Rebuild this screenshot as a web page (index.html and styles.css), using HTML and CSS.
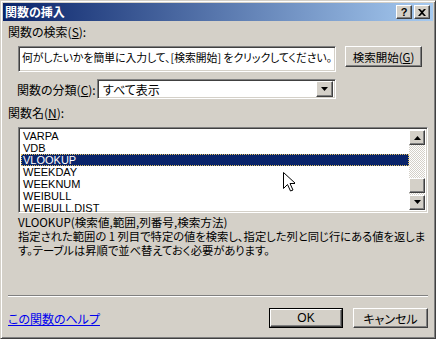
FILE: index.html
```html
<!doctype html>
<html lang="ja">
<head>
    <meta charset="UTF-8">
    <title>関数の挿入</title>
    <link rel="stylesheet" href="styles.css">
</head>
<body>
    <div class="win">
        <div class="title">
            <span class="title-text">関数の挿入</span>
            <span class="tbtn">?</span>
            <span class="tbtn">
                <svg width="8" height="7" viewBox="0 0 8 7"><path d="M0 0h2l2 2 2-2h2L5 3.5 8 7H6L4 5 2 7H0l3-3.5z" fill="#000"/></svg>
            </span>
        </div>
        <div class="content">
            <div class="lbl">関数の検索(<u>S</u>):</div>
            <div class="search-row">
                <div class="field search">何がしたいかを簡単に入力して、[検索開始] をクリックしてください。</div>
                <div class="btn search-btn">検索開始(<u>G</u>)</div>
            </div>
            <div class="cat-row">
                <span class="cat-lbl">関数の分類(<u>C</u>):</span>
                <div class="field select">
                    <span class="sel-text">すべて表示</span>
                    <span class="btn drop"><svg width="7" height="4" viewBox="0 0 7 4"><path d="M0 0h7L3.5 4z" fill="#000"/></svg></span>
                </div>
            </div>
            <div class="lbl name-lbl">関数名(<u>N</u>):</div>
            <div class="field list">
                <ul class="items">
                    <li>VARPA</li>
                    <li>VDB</li>
                    <li class="sel">VLOOKUP</li>
                    <li>WEEKDAY</li>
                    <li>WEEKNUM</li>
                    <li>WEIBULL</li>
                    <li>WEIBULL.DIST</li>
                </ul>
                <div class="sbar">
                    <span class="btn sb-btn"><svg width="7" height="4" viewBox="0 0 7 4"><path d="M3.5 0L7 4H0z" fill="#000"/></svg></span>
                    <span class="track top"></span>
                    <span class="btn thumb"></span>
                    <span class="btn sb-btn"><svg width="7" height="4" viewBox="0 0 7 4"><path d="M0 0h7L3.5 4z" fill="#000"/></svg></span>
                </div>
                <svg class="cursor" width="12" height="20" viewBox="0 0 12 20"><path d="M0.5 0.5v16l4-4 3 6.5 2.5-1-3-6.5h5.5z" fill="#fff" stroke="#000"/></svg>
            </div>
            <div class="syntax">VLOOKUP(検索値,範囲,列番号,検索方法)</div>
            <div class="desc">指定された範囲の 1 列目で特定の値を検索し、指定した列と同じ行にある値を返しま<br>す。テーブルは昇順で並べ替えておく必要があります。</div>
            <div class="sep"></div>
            <div class="foot">
                <a class="help" href="#">この関数のヘルプ</a>
                <div class="def"><div class="btn ok">OK</div></div>
                <div class="btn cancel">キャンセル</div>
            </div>
        </div>
    </div>
</body>
</html>
```

FILE: styles.css
```css
*{
    box-sizing:border-box;
}
body{
    margin:0;
    font-family:"Noto Sans CJK JP","Liberation Sans",sans-serif;
    font-size:12px;
    font-feature-settings:"palt";
    color:#000;
}
ul,li{
    margin:0;
    padding:0;
    list-style:none;
}
u{
    text-decoration:underline;
}
.win{
    width:436px;
    height:339px;
    background:#d4d0c8;
    border:1px solid;
    border-color:#d4d0c8 #404040 #404040 #d4d0c8;
    box-shadow:inset 1px 1px #fff,inset -1px -1px #808080;
    padding:2px;
}
.title{
    height:18px;
    display:flex;
    align-items:center;
    gap:2px;
    padding:0 3px 0 2px;
    background:linear-gradient(to right,#0a246a,#a6caf0);
}
.title-text{
    flex:1;
    color:#fff;
    font-weight:bold;
    line-height:18px;
}
.tbtn{
    width:16px;
    height:14px;
    display:flex;
    align-items:center;
    justify-content:center;
    background:#d4d0c8;
    border:1px solid;
    border-color:#fff #404040 #404040 #fff;
    box-shadow:inset -1px -1px #808080;
    font-weight:bold;
    font-size:11px;
    font-family:"Liberation Sans",sans-serif;
    line-height:12px;
}
.content{
    padding:3px 5px 0 5px;
}
.lbl{
    height:16px;
    line-height:16px;
}
.btn{
    background:#d4d0c8;
    border:1px solid;
    border-color:#fff #404040 #404040 #fff;
    box-shadow:inset -1px -1px #808080;
    display:flex;
    align-items:center;
    justify-content:center;
}
.field{
    background:#fff;
    border:1px solid;
    border-color:#808080 #fff #fff #808080;
    box-shadow:inset 1px 1px #404040,inset -1px -1px #d4d0c8;
}
.search-row{
    display:flex;
    align-items:flex-start;
    margin-top:6px;
    padding-left:10px;
}
.search{
    width:318px;
    height:26px;
    padding:3px 3px;
    font-size:10.8px;
    line-height:14px;
    white-space:nowrap;
    overflow:hidden;
}
.search-btn{
    width:77px;
    height:21px;
    margin-left:9px;
    font-size:11.5px;
}
.cat-row{
    display:flex;
    align-items:center;
    margin-top:7px;
    padding-left:9px;
}
.cat-lbl{
    width:80px;
}
.select{
    width:239px;
    height:20px;
    display:flex;
    align-items:center;
    padding:2px;
}
.sel-text{
    flex:1;
    padding-left:3px;
}
.drop{
    width:17px;
    height:16px;
}
.name-lbl{
    margin-top:6px;
}
.list{
    position:relative;
    margin:6px 0 0 10px;
    height:86px;
    display:flex;
    padding:2px;
}
.items{
    flex:1;
    font-family:"Liberation Sans",sans-serif;
    font-size:11px;
    line-height:12px;
}
.items li{
    height:12px;
    padding-left:2px;
    white-space:nowrap;
}
.items .sel{
    background:#0a246a;
    color:#fff;
    outline:1px dotted #e0c060;
    outline-offset:-1px;
}
.sbar{
    width:16px;
    display:flex;
    flex-direction:column;
    background:repeating-conic-gradient(#d4d0c8 0 25%,#fff 0 50%) 0 0/2px 2px;
}
.sb-btn,.thumb{
    height:16px;
}
.track.top{
    height:35px;
}
.thumb{
    margin-bottom:2px;
}
.cursor{
    position:absolute;
    left:264px;
    top:44px;
}
.syntax{
    margin:2px 0 0 10px;
    font-size:11.6px;
    line-height:14px;
    white-space:nowrap;
}
.desc{
    margin-left:10px;
    font-size:11.3px;
    line-height:14px;
    white-space:nowrap;
}
.sep{
    margin-top:38px;
    height:2px;
    border-top:1px solid #808080;
    border-bottom:1px solid #fff;
}
.foot{
    display:flex;
    align-items:center;
    margin-top:11px;
}
.help{
    flex:1;
    color:#0000ee;
    text-decoration:underline;
}
.def{
    border:1px solid #000;
    width:74px;
    height:20px;
}
.ok{
    height:18px;
    font-family:"Liberation Sans",sans-serif;
}
.cancel{
    width:75px;
    height:20px;
    margin-left:10px;
}
```
